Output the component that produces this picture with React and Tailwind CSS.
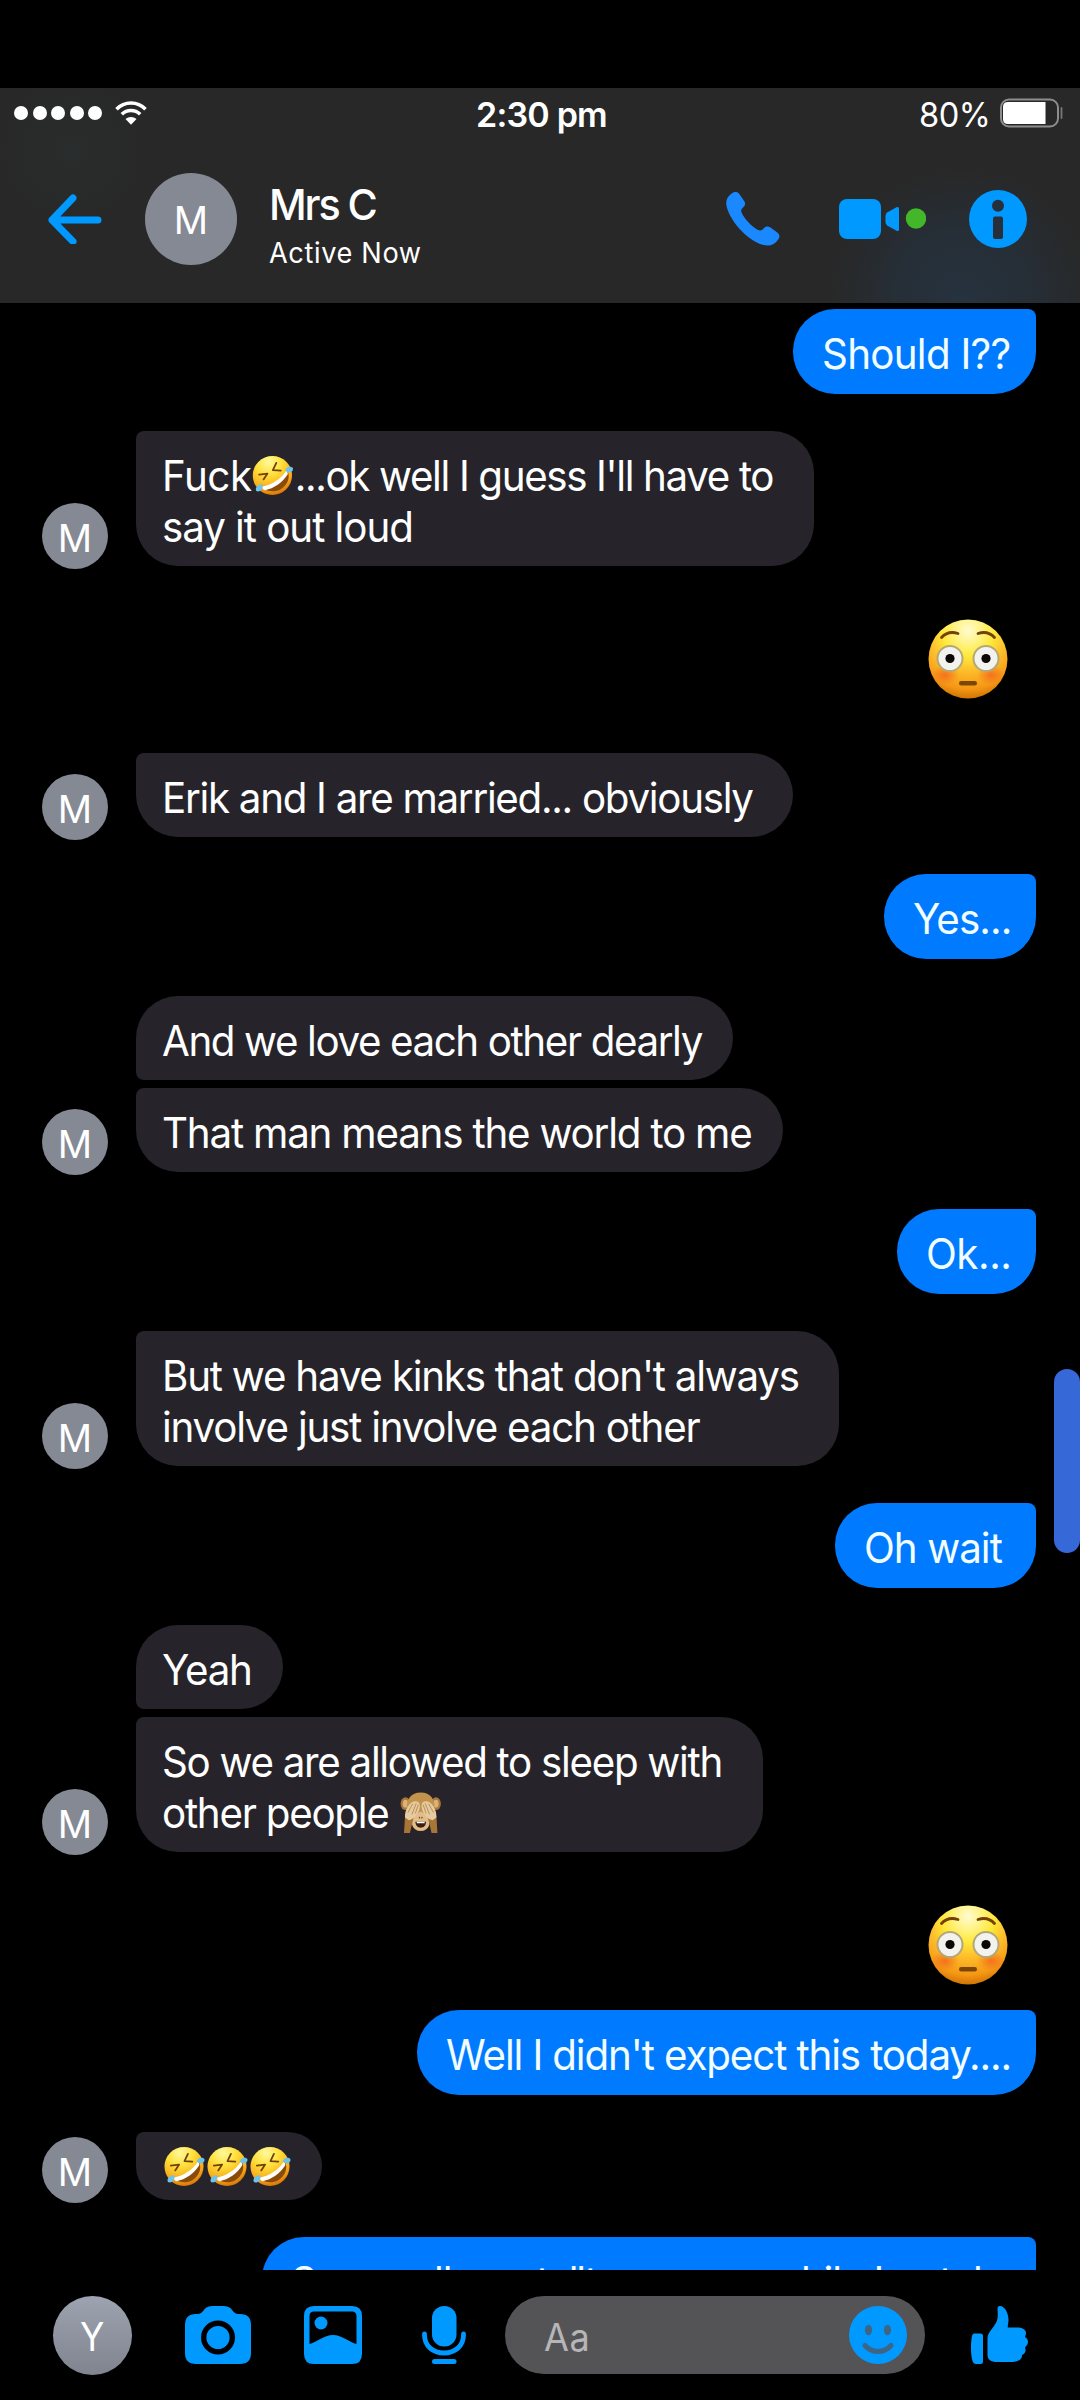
import React from 'react';

const EMOJI = {
  rofl: Rofl,
  monkey: Monkey,
};

const messages = [
  { side: 'out', width: 'w-[243px]', gap: 'mt-[6px]', lines: [{ text: 'Should I??', track: 'tracking-[-0.75px]' }] },
  {
    side: 'in', avatar: true, width: 'w-[678px]', gap: 'mt-[37px]',
    lines: [
      { text: 'Fuck', track: 'tracking-[-0.5px]', emoji: 'rofl', after: "...ok well I guess I'll have to", afterTrack: 'tracking-[-1.42px]' },
      { text: 'say it out loud', track: 'tracking-[-1.1px]' },
    ],
  },
  { side: 'face', gap: 'mt-[53px]' },
  { side: 'in', avatar: true, width: 'w-[657px]', gap: 'mt-[54px]', lines: [{ text: 'Erik and I are married... obviously', track: 'tracking-[-1.35px]' }] },
  { side: 'out', width: 'w-[152px]', gap: 'mt-[37px]', lines: [{ text: 'Yes...', track: 'tracking-[-0.95px]' }] },
  { side: 'in', first: true, width: 'w-[597px]', gap: 'mt-[37px]', lines: [{ text: 'And we love each other dearly', track: 'tracking-[-1.45px]' }] },
  { side: 'in', avatar: true, width: 'w-[647px]', gap: 'mt-[8px]', lines: [{ text: 'That man means the world to me', track: 'tracking-[-1.25px]' }] },
  { side: 'out', width: 'w-[139px]', gap: 'mt-[37px]', lines: [{ text: 'Ok...', track: 'tracking-[-0.5px]' }] },
  {
    side: 'in', avatar: true, width: 'w-[703px]', gap: 'mt-[37px]',
    lines: [
      { text: "But we have kinks that don't always", track: 'tracking-[-1.28px]' },
      { text: 'involve just involve each other', track: 'tracking-[-1.28px]' },
    ],
  },
  { side: 'out', width: 'w-[201px]', gap: 'mt-[37px]', lines: [{ text: 'Oh wait', track: 'tracking-[-1px]' }] },
  { side: 'in', first: true, width: 'w-[147px]', gap: 'mt-[37px]', lines: [{ text: 'Yeah', track: 'tracking-[-1.3px]' }] },
  {
    side: 'in', avatar: true, width: 'w-[627px]', gap: 'mt-[8px]',
    lines: [
      { text: 'So we are allowed to sleep with', track: 'tracking-[-1.35px]' },
      { text: 'other people ', track: 'tracking-[-1.3px]', emoji: 'monkey' },
    ],
  },
  { side: 'face', gap: 'mt-[53px]' },
  { side: 'out', width: 'w-[619px]', gap: 'mt-[25px]', lines: [{ text: "Well I didn't expect this today....", track: 'tracking-[-1.18px]' }] },
  { side: 'in', avatar: true, laughs: true, width: 'w-[186px]', gap: 'mt-[37px]' },
  { side: 'last', gap: 'mt-[37px]' },
];

function Rofl({ className }) {
  return (
    <svg viewBox="0 0 42 42" preserveAspectRatio="none" className={className} role="img" aria-label="rofl">
      <defs>
        <radialGradient id="rofl" cx="40%" cy="15%" r="85%">
          <stop offset="0" stopColor="#fffa9c" />
          <stop offset="0.4" stopColor="#ffe03a" />
          <stop offset="0.8" stopColor="#f8a91a" />
          <stop offset="1" stopColor="#d97808" />
        </radialGradient>
      </defs>
      <circle cx="20.500" cy="21" r="20" fill="url(#rofl)" />
      <path d="M11 33.500C20 33 31 26 36 16.500C39 23 36 31 29 35C23 38.500 15 37.500 11 33.500Z" fill="#8a4b08" />
      <path d="M10 32.500C19 31 29 25 34.500 16.500C36 17.500 36.500 18.500 36 20C31 28 22 34.500 13 36C11 35.500 10 34 10 32.500Z" fill="#fff" />
      <path d="M7 20L15.500 19L11.500 25M24.500 8L21 15.500L29 16" fill="none" stroke="#70400c" strokeWidth="1.800" strokeLinecap="round" strokeLinejoin="round" />
      <path d="M33.500 16C34.500 11.500 39.500 11 41.500 13.500C42 17.500 37 19 33.500 16Z" fill="#6bc3ee" />
      <path d="M10.500 30C5.500 30 2.500 33.500 4 37C8 38.500 11.500 35 10.500 30Z" fill="#6bc3ee" />
    </svg>
  );
}

function Monkey({ className }) {
  return (
    <svg viewBox="0 0 42 42" preserveAspectRatio="none" className={className} role="img" aria-label="see no evil">
      <ellipse cx="5.500" cy="12" rx="5" ry="6.500" fill="#a97839" />
      <ellipse cx="36.500" cy="12" rx="5" ry="6.500" fill="#a97839" />
      <ellipse cx="5.500" cy="12" rx="2.700" ry="4" fill="#d9b27c" />
      <ellipse cx="36.500" cy="12" rx="2.700" ry="4" fill="#d9b27c" />
      <path d="M21 0.500C31 0.500 36 8 35 17C34 24 31 27 30 32C29 38 25 40 21 40S13 38 12 32C11 27 8 24 7 17C6 8 11 0.500 21 0.500Z" fill="#c3924b" />
      <path d="M21 20C26 22 30 28 29.500 33C29 37 25 39.500 21 39.500S13 37 12.500 33C12 28 16 22 21 20Z" fill="#e0bd8b" />
      <path d="M15.500 30.500H26.500C26 35 24 36.500 21 36.500S16 35 15.500 30.500Z" fill="#3b1d12" />
      <path d="M17 30.500H25V32H17Z" fill="#fff" />
      <path d="M19.500 25.500L20 27M22.500 25.500L22 27" stroke="#6b4525" strokeWidth="1.300" />
      <path d="M4 42L5 25L10 22L13.500 27L10 42ZM38 42L37 25L32 22L28.500 27L32 42Z" fill="#a87538" />
      <path d="M5 26C4.500 18 10 10 15 9.500C19 9 20.500 12 20 16C19.500 21 15 28 9 29ZM37 26C37.500 18 32 10 27 9.500C23 9 21.500 12 22 16C22.500 21 27 28 33 29Z" fill="#e6cba0" />
      <path d="M8 21L13 12M12 23L16.500 11.500M15.500 22L18.500 13M34 21L29 12M30 23L25.500 11.500M26.500 22L23.500 13" stroke="#b08850" strokeWidth="0.900" />
    </svg>
  );
}

function Flushed() {
  return (
    <svg viewBox="0 0 80 80" className="h-[80px] w-[80px]" role="img" aria-label="flushed">
      <defs>
        <radialGradient id="skin" cx="50%" cy="14%" r="86%">
          <stop offset="0" stopColor="#fffbd0" />
          <stop offset="0.18" stopColor="#fff48c" />
          <stop offset="0.38" stopColor="#ffe838" />
          <stop offset="0.58" stopColor="#fdc02c" />
          <stop offset="0.86" stopColor="#f59714" />
          <stop offset="1" stopColor="#d07406" />
        </radialGradient>
        <radialGradient id="blush">
          <stop offset="0" stopColor="#f2641e" stopOpacity="0.8" />
          <stop offset="1" stopColor="#f2641e" stopOpacity="0" />
        </radialGradient>
      </defs>
      <circle cx="40" cy="40" r="39.500" fill="url(#skin)" />
      <ellipse cx="17" cy="56" rx="14" ry="10" fill="url(#blush)" />
      <ellipse cx="63" cy="56" rx="14" ry="10" fill="url(#blush)" />
      <g fill="#f2f2ee" stroke="#b3a878" strokeWidth="2">
        <circle cx="22" cy="39.500" r="12.500" />
        <circle cx="58" cy="39.500" r="12.500" />
      </g>
      <circle cx="22" cy="39.500" r="4.600" fill="#0c0805" />
      <circle cx="58" cy="39.500" r="4.600" fill="#0c0805" />
      <path d="M13.500 18.500C18 13.500 24 12.500 30 14.500M66.500 18.500C62 13.500 56 12.500 50 14.500" fill="none" stroke="#744206" strokeWidth="2.800" strokeLinecap="round" />
      <rect x="31" y="62" width="18" height="4.500" rx="2.200" fill="#7b4607" />
    </svg>
  );
}

function Avatar({ letter, className }) {
  return (
    <div className={`flex shrink-0 items-center justify-center rounded-full bg-[#858994] leading-none text-white ${className}`}>
      {letter}
    </div>
  );
}

function Line({ line }) {
  const Emoji = line.emoji ? EMOJI[line.emoji] : null;
  return (
    <div className="flex h-[51px] origin-left scale-x-[0.96] items-center whitespace-pre">
      <span className={line.track}>{line.text}</span>
      {Emoji && <Emoji className="mx-[1px] h-[41px] w-[43px] shrink-0" />}
      {line.after && <span className={line.afterTrack}>{line.after}</span>}
    </div>
  );
}

function Message({ msg }) {
  if (msg.side === 'face') {
    return (
      <div className={`flex shrink-0 justify-end pr-[72px] ${msg.gap}`}>
        <Flushed />
      </div>
    );
  }

  // runs under the composer, only the top of the bubble shows
  if (msg.side === 'last') {
    return (
      <div className={`flex shrink-0 justify-end pr-11 ${msg.gap}`}>
        <div className="h-[85px] w-[774px] rounded-[42px] rounded-tr-[8px] bg-[#007aff] pt-[19px] pl-[29px] text-[#f2fdff]">
          <div className="flex h-[51px] origin-left scale-x-[0.96] tracking-[-1.2px] whitespace-pre">
            <span className="w-[180px] shrink-0">So we all</span>
            <span className="w-[126px] shrink-0 tracking-[-2.2px]">can tell</span>
            <span className="w-[192px] shrink-0">to me now</span>
            <span className="w-[122px] shrink-0">while I</span>
            <span className="shrink-0">watch</span>
          </div>
        </div>
      </div>
    );
  }

  if (msg.side === 'out') {
    return (
      <div className={`flex shrink-0 justify-end pr-11 ${msg.gap}`}>
        <div className={`h-[85px] rounded-[42px] rounded-tr-[8px] bg-[#007aff] pt-[19px] pl-[29px] text-[#f2fdff] ${msg.width}`}>
          {msg.lines.map((line) => <Line key={line.text} line={line} />)}
        </div>
      </div>
    );
  }

  return (
    <div className={`flex shrink-0 items-end pl-[42px] ${msg.gap}`}>
      <div className="w-[94px] shrink-0">
        {msg.avatar && <Avatar letter="M" className="-mb-[3px] h-[66px] w-[66px] pt-[3px] text-[38px]" />}
      </div>
      {msg.laughs ? (
        <div className={`flex h-[68px] items-center rounded-[34px] rounded-tl-[8px] bg-[#26242a] pl-7 ${msg.width}`}>
          <Rofl className="mr-[2px] h-[41px] w-[41px]" />
          <Rofl className="mr-[2px] h-[41px] w-[41px]" />
          <Rofl className="h-[41px] w-[41px]" />
        </div>
      ) : (
        <div className={`rounded-[42px] bg-[#26242a] pt-[19px] pb-[14px] pl-[26px] text-white ${msg.first ? 'rounded-bl-[8px]' : 'rounded-tl-[8px]'} ${msg.width}`}>
          {msg.lines.map((line) => <Line key={line.text} line={line} />)}
        </div>
      )}
    </div>
  );
}

function StatusBar() {
  return (
    <div className="grid h-[50px] grid-cols-3 items-center">
      <div className="flex items-center pl-[14px]">
        <div className="flex gap-[4.500px]">
          {[0, 1, 2, 3, 4].map((i) => (
            <span key={i} className="h-[14px] w-[14px] rounded-full bg-white" />
          ))}
        </div>
        <svg viewBox="0 0 32 24" className="ml-[13px] h-6 w-8" fill="none" stroke="#fff">
          <path d="M1.500 8.200C9.500 0 22.500 0 30.500 8.200" strokeWidth="3.600" />
          <path d="M6.800 13.300C12 8.300 20 8.300 25.200 13.300" strokeWidth="3.600" />
          <path d="M10.500 18C13.500 15.300 18.500 15.300 21.500 18L16 23.800Z" fill="#fff" stroke="none" />
        </svg>
      </div>
      <div className="pt-[3px] pl-[3px] text-center text-[34px] leading-none font-semibold tracking-[-0.8px] whitespace-nowrap text-white">2:30 pm</div>
      <div className="flex items-center justify-end pr-[17px]">
        <span className="mr-[10px] origin-right scale-x-[0.96] pt-[3px] text-[34px] leading-none tracking-[-0.5px] text-white">80%</span>
        <svg viewBox="0 0 63 30" className="h-[30px] w-[63px]">
          <rect x="1" y="1.500" width="57" height="27" rx="8" fill="none" stroke="#8d8d8d" strokeWidth="2" />
          <path d="M8 4H45.500V26H8Q3 26 3 21V9Q3 4 8 4Z" fill="#fff" />
          <path d="M61.500 10V20" stroke="#777" strokeWidth="1.800" strokeLinecap="round" />
        </svg>
      </div>
    </div>
  );
}

function Header() {
  return (
    <header className="h-[215px] shrink-0 bg-[#282828] bg-[radial-gradient(circle_at_962px_210px,#26323f_0px,#262e36_70px,#28282800_130px),radial-gradient(circle_at_72px_62px,#2a2d2d_0px,#28282800_70px)]">
      <StatusBar />
      <div className="flex h-[162px] items-center pl-12">
        <svg viewBox="0 0 54 50" className="h-[50px] w-[54px] shrink-0" fill="none" stroke="#0099ff" strokeWidth="7" strokeLinecap="round" strokeLinejoin="round">
          <path d="M25 4L4 26L25 47.500M4 26H50" />
        </svg>
        <Avatar letter="M" className="ml-[43px] h-[92px] w-[92px] pt-[2px] text-[38px]" />
        <div className="ml-[32px] flex w-[457px] flex-col gap-2 pt-3 text-white">
          <div className="origin-left scale-x-[0.96] text-[43px] leading-[48px] font-medium tracking-[-2.200px]">Mrs C</div>
          <div className="origin-left scale-x-[0.97] text-[28px] leading-[34px] tracking-[0.650px]">Active Now</div>
        </div>
        <svg viewBox="0 0 54 54" className="h-[54px] w-[54px] shrink-0" fill="#1a88ff">
          <path d="M6 1.200C8.500-0.600 11.500-0.300 13.300 2L18 8.700C19.800 11.300 19.300 13.200 17.500 15C15.300 17 14.600 18.400 15.700 20.800C18.500 27 25.500 34.500 31.500 37.700C34.300 39.200 35.800 38.500 37.800 36.300C39.700 34.300 42 34 44.500 35.600L51 40.200C53.700 42.200 54.200 44.600 52.500 47C48.500 53 43.500 54.700 36.500 52.800C20.500 48.200 2 26.500 0.300 12.500C-0.300 7.500 2 3.800 6 1.200Z" />
        </svg>
        <svg viewBox="0 0 87 40" className="ml-[59px] h-10 w-[87px] shrink-0" fill="#0099ff">
          <rect x="0" y="0" width="42" height="40" rx="8" />
          <path d="M46.500 17Q46.500 14.500 48.500 13.300L57.500 8.300Q60 7.200 60 9.500V30.500Q60 32.800 57.500 31.700L48.500 26.700Q46.500 25.500 46.500 23Z" />
          <circle cx="77" cy="19.500" r="10.200" fill="#42b72a" />
        </svg>
        <svg viewBox="0 0 58 58" className="ml-[43px] h-[58px] w-[58px] shrink-0">
          <circle cx="29" cy="29" r="29" fill="#0099ff" />
          <circle cx="29" cy="15.700" r="6" fill="#27303a" />
          <rect x="24" y="26.500" width="10" height="22.500" rx="2" fill="#27303a" />
        </svg>
      </div>
    </header>
  );
}

function Composer() {
  return (
    <footer className="z-10 flex h-[130px] shrink-0 items-center bg-black pl-[53px]">
      <div className="flex h-[79px] w-[79px] shrink-0 items-center justify-center rounded-full bg-linear-to-b from-[#9da3b0] to-[#80848f] pt-[2px] text-[39px] leading-none text-white">
        <span className="scale-x-[0.92]">Y</span>
      </div>
      <svg viewBox="0 0 66 58" className="ml-[53px] h-[58px] w-[66px] shrink-0">
        <path d="M11 8H13C17 8 18.500 3.500 21.500 1.500Q23.500 0 27 0H39Q42.500 0 44.500 1.500C47.500 3.500 49 8 53 8H55Q66 8 66 19V47Q66 58 55 58H11Q0 58 0 47V19Q0 8 11 8Z" fill="#0099ff" />
        <circle cx="33" cy="31.500" r="14.300" fill="none" stroke="#000" strokeWidth="5.400" />
      </svg>
      <svg viewBox="0 0 58 58" className="ml-[53px] h-[58px] w-[58px] shrink-0">
        <path d="M10 0H48Q58 0 58 10V48Q58 58 48 58H10Q0 58 0 48V10Q0 0 10 0ZM10 5.500Q5.500 5.500 5.500 10V38C12 36.500 20 29 29 29S46 36.500 52.500 38V10Q52.500 5.500 48 5.500Z" fill="#0099ff" fillRule="evenodd" />
        <circle cx="17" cy="17" r="6.500" fill="#0099ff" />
      </svg>
      <svg viewBox="0 0 44 58" className="ml-[60px] h-[58px] w-11 shrink-0">
        <rect x="10" y="0" width="24.500" height="40.500" rx="12" fill="#0099ff" />
        <path d="M2.500 28V29C2.500 40 11 47 22 47S41.500 40 41.500 29V28" fill="none" stroke="#0099ff" strokeWidth="4.800" strokeLinecap="round" />
        <rect x="10" y="53" width="24.500" height="5" rx="2.500" fill="#0099ff" />
      </svg>
      <div className="ml-[39px] flex h-[78px] w-[420px] shrink-0 items-center justify-between rounded-full bg-[#545456] pr-[18px] pl-[39px]">
        <span className="origin-left scale-x-[0.95] pt-[4px] text-[38px] leading-none tracking-[0.500px] text-[#b6b6b8]">Aa</span>
        <svg viewBox="0 0 58 58" className="h-[58px] w-[58px]">
          <circle cx="29" cy="29" r="29" fill="#0099ff" />
          <ellipse cx="19.500" cy="24" rx="3.600" ry="5.200" fill="#3f6585" />
          <ellipse cx="38.500" cy="24" rx="3.600" ry="5.200" fill="#3f6585" />
          <path d="M16 39.500C23 47.500 35 47.500 42 39.500" fill="none" stroke="#3f6585" strokeWidth="5" strokeLinecap="round" />
        </svg>
      </div>
      <svg viewBox="0 0 57 58" className="ml-[46px] h-[58px] w-[57px] shrink-0" fill="#0099ff">
        <path d="M3 27.500H9.500Q12 27.500 12 30V55.500Q12 58 9.500 58H5Q2.500 58 1.500 55C-0.300 49 -0.500 38 0.800 31Q1.400 27.500 3 27.500Z" />
        <path d="M26.500 2.500C26.500 0 29 -0.700 31.500 0.700C35 2.700 37.500 8 37.500 14C37.500 17 36.500 20 36.800 21.500H46C51 21.500 55 23.500 55 27C55 29 54 30 54 31C56 32 57 34 57 36C57 39 54.500 40.500 54 41.500C55.500 44.500 54 48 51 49C51.500 52 48.500 55.500 42 56H26C20 56 16.500 53.500 16.500 49V33C16.500 28 19 25.500 21.500 22C25 17.500 26.800 14.500 26.800 9Z" />
      </svg>
    </footer>
  );
}

export default function App() {
  return (
    <div className="relative flex h-[2400px] w-[1080px] flex-col overflow-hidden bg-black pt-[88px] font-['Inter',sans-serif] text-[42px] leading-[51px]">
      <Header />
      <main className="flex h-[1967px] shrink-0 flex-col overflow-hidden">
        {messages.map((msg, i) => <Message key={i} msg={msg} />)}
      </main>
      <Composer />
      {/* Scroll thumb */}
      <div className="absolute top-[1369px] right-0 h-[184px] w-[26px] rounded-full bg-[#3768d8]" />
    </div>
  );
}
